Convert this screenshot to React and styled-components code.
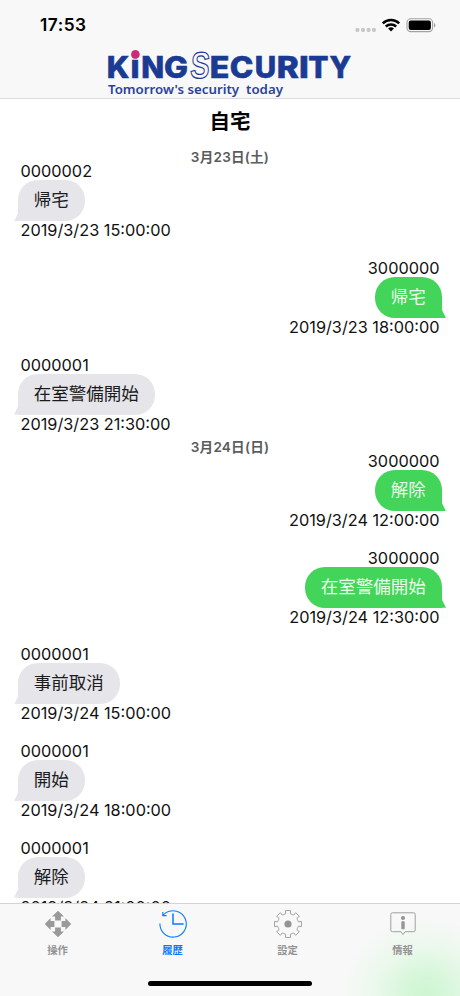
import React, { useState } from 'react'
import styled, { createGlobalStyle, css } from 'styled-components'

const GlobalStyle = createGlobalStyle`
  * {
    box-sizing: border-box;
  }
  body {
    margin: 0;
    background: #fff;
    color: #111;
    font-family: Inter, "Noto Sans CJK JP", sans-serif;
  }
`
const Screen = styled.div`
  width: 460px;
  height: 996px;
  display: flex;
  flex-direction: column;
  overflow: hidden;
  background: #fff;
`
const Header = styled.header`
  flex: none;
  height: 99px;
  background: #f8f8f8;
  border-bottom: 1px solid #dcdcdc;
`
const StatusBar = styled.div`
  display: flex;
  align-items: center;
  justify-content: space-between;
  height: 42px;
  padding: 8px 24px 0 40px;
`
const Clock = styled.span`
  font-size: 17.3px;
  font-weight: 600;
  line-height: 20px;
  letter-spacing: 0.5px;
  color: #000;
`
const LogoSvg = styled.svg`
  display: block;
  margin: 0 auto;
`
const LogoText = styled.text`
  font-family: Inter, sans-serif;
  font-weight: 800;
  font-size: ${props => props.$size || 29.3}px;
  fill: #1b3a93;
  stroke: #1b3a93;
  stroke-width: 0.6;
`
const LogoOutline = styled.text`
  font-family: "Liberation Sans", sans-serif;
  font-weight: 700;
  font-size: 37px;
  fill: #f8f8f8;
  stroke: #1b3a93;
  stroke-width: 1.2;
`
const Tagline = styled.text`
  font-family: "Noto Sans", sans-serif;
  font-weight: 600;
  font-size: 13px;
  fill: #2a4399;
  white-space: pre;
`
const History = styled.main`
  flex: 1;
  min-height: 0;
  overflow: hidden;
`
const Title = styled.h1`
  height: 45.75px;
  margin: 0;
  font-size: 20.5px;
  font-weight: 700;
  line-height: 46px;
  text-align: center;
  color: #000;
`
const DayLabel = styled.div`
  height: 16.65px;
  padding-top: 4px;
  font-size: 13.6px;
  font-weight: 600;
  line-height: 16px;
  letter-spacing: 0.2px;
  text-align: center;
  color: #5c5c5c;
`
const Entry = styled.div`
  display: flex;
  flex-direction: column;
  align-items: ${props => (props.$mine ? 'flex-end' : 'flex-start')};
  height: 80px;
  padding: 0 20.5px;
  margin-top: ${props => (props.$first ? 0 : '16.6px')};
  font-size: 16.3px;
  line-height: 19px;
`
const User = styled.span`
  height: 19px;
  line-height: 21px;
`
const Bubble = styled.div`
  position: relative;
  flex: none;
  height: 41px;
  margin: 0 -2.5px;
  padding: 0 16.2px 0 15.8px;
  font-size: 17.5px;
  line-height: 40px;
  ${props => (props.$mine ? css`
    color: #e9fbe9;
    background: #43d45a;
    border-radius: 20px 20px 0 20px;
  ` : css`
    color: #1c1c1e;
    background: #e5e5ea;
    border-radius: 20px 20px 20px 0;
  `)}
  &::after {
    content: "";
    position: absolute;
    bottom: 0;
    ${props => (props.$mine ? 'right: -4px;' : 'left: -4px;')}
    width: 5px;
    height: 8px;
    background: inherit;
    clip-path: ${props => (props.$mine
      ? 'polygon(0 0, 20% 0, 100% 100%, 0 100%)'
      : 'polygon(80% 0, 100% 0, 100% 100%, 0 100%)')};
  }
`
const TabBar = styled.nav`
  flex: none;
  display: grid;
  grid-template-columns: repeat(4, 1fr);
  grid-template-rows: 68px 1fr;
  height: 93px;
  border-top: 1px solid #d4d4d4;
  background: radial-gradient(ellipse 84px 76px at 426px 89px, #cdf6d1 0%, #d8f7db 28%, #ebf8ec 60%, #f8f8f8 100%) #f8f8f8;
`
const Tab = styled.button`
  display: flex;
  flex-direction: column;
  align-items: center;
  padding: 4px 0 0;
  border: 0;
  background: none;
  font-family: inherit;
  font-size: 10.3px;
  font-weight: 600;
  line-height: 16px;
  color: ${props => (props.$active ? '#0a7aff' : '#949494')};
  svg {
    display: block;
    margin-bottom: 2px;
  }
`
const HomeIndicator = styled.div`
  grid-column: 1 / -1;
  justify-self: center;
  width: 164px;
  height: 5px;
  margin-top: 9px;
  border-radius: 3px;
  background: #000;
`

const StatusIcons = () => (
  <svg width="84" height="20" viewBox="352 15 84 20">
    {[357.5, 363.1, 368.6, 374].map(x => (
      <rect key={x} x={x - 2} y="28" width="3.9" height="3.9" rx="1.4" fill="#c8c8c8" />
    ))}
    <g fill="none" stroke="#000" strokeWidth="2.5">
      <path d="M382.8 23.3a12 12 0 0 1 16.4 0" />
      <path d="M385.8 26.5a7.6 7.6 0 0 1 10.4 0" />
    </g>
    <path d="M391 31.6l-2.9-3a4.2 4.2 0 0 1 5.8 0z" fill="#000" />
    <rect x="407" y="18.8" width="25.6" height="12.8" rx="3.8" fill="none" stroke="#a2a2a2" strokeWidth="1.1" />
    <rect x="408.7" y="20.5" width="22.2" height="9.4" rx="2.2" fill="#000" />
    <path d="M434 23v4.4c2-.8 2-3.6 0-4.4z" fill="#a2a2a2" />
  </svg>
)

// [letter, x, advance]
const wordmark = [
  ['K', 106.8, 22.6],
  ['N', 141.2, 22.9],
  ['G', 164.1, 24],
  ['E', 209.8, 19.6],
  ['C', 229.8, 23.6],
  ['U', 254.8, 21.4],
  ['R', 276.7, 22],
  ['I', 299, 9.8],
  ['T', 308.3, 20.2],
  ['Y', 329.4, 21.6]
]

const Logo = () => (
  <LogoSvg width="250" height="56" viewBox="105 42 250 56">
    <LogoText x="130.6" y="78" $size="32">i</LogoText>
    <LogoOutline transform="translate(189.4 78) skewX(-5) scale(.78 1)">S</LogoOutline>
    {wordmark.map(([letter, x, advance]) => (
      <LogoText key={letter} x={x} y="78" textLength={advance} lengthAdjust="spacingAndGlyphs">{letter}</LogoText>
    ))}
    <circle cx="135.4" cy="54.4" r="4.3" fill="#cb2a79" />
    <Tagline x="108" y="93.8" textLength="175" lengthAdjust="spacingAndGlyphs">{'Tomorrow\'s security  today'}</Tagline>
  </LogoSvg>
)

const MoveIcon = () => (
  <svg width="32" height="32" viewBox="-16 -16 32 32" fill="#9a9a9a">
    {[0, 90, 180, 270].map(deg => (
      <path key={deg} transform={`rotate(${deg})`} d="M0 -13.2L6 -7.4H2.9V-3.6H-2.9V-7.4H-6Z" />
    ))}
  </svg>
)

const HistoryIcon = () => (
  <svg width="32" height="32" viewBox="-16 -16 32 32" fill="none" stroke="#0a7aff">
    <path d="M-13.1 -0.5A13.2 13.2 0 1 0 -4.6 -12.4Q-7.6 -11.4 -9.8 -9" strokeWidth="1.1" />
    <path d="M-10.2 -12V-8.4H-6.4" strokeWidth="1.2" />
    <path d="M0 -10.5V0H10.6" strokeWidth="1.5" />
  </svg>
)

const GearIcon = () => {
  const teeth = []
  for (let i = 0; i < 8; i++) {
    [[-21, 10.4], [-12, 10.6], [-11, 13.7], [11, 13.7], [12, 10.6], [21, 10.4]].forEach(([offset, radius]) => {
      const angle = (i * 45 + offset) * Math.PI / 180
      teeth.push(`${(radius * Math.cos(angle)).toFixed(2)},${(radius * Math.sin(angle)).toFixed(2)}`)
    })
  }
  return (
    <svg width="32" height="32" viewBox="-16 -16 32 32">
      <polygon points={teeth.join(' ')} fill="none" stroke="#a3a3a3" strokeLinejoin="round" />
      <circle r="3.6" fill="#949494" />
    </svg>
  )
}

const InfoIcon = () => (
  <svg width="32" height="32" viewBox="-16 -16 32 32">
    <path
      d="M-10.6 -11.2H10.6Q12.2 -11.2 12.2 -9.6V6.2Q12.2 7.7 10.6 7.7H2L0 10.6L-2 7.7H-10.6Q-12.2 7.7 -12.2 6.2V-9.6Q-12.2 -11.2 -10.6 -11.2Z"
      fill="none"
      stroke="#a0a0a0"
    />
    <circle cy="-6" r="2.1" fill="#949494" />
    <rect x="-1.7" y="-2.8" width="3.4" height="8" rx="0.8" fill="#949494" />
  </svg>
)

const days = [
  {
    label: '3月23日(土)',
    entries: [
      { user: '0000002', text: '帰宅', time: '2019/3/23 15:00:00' },
      { user: '3000000', text: '帰宅', time: '2019/3/23 18:00:00', mine: true },
      { user: '0000001', text: '在室警備開始', time: '2019/3/23 21:30:00' }
    ]
  },
  {
    label: '3月24日(日)',
    entries: [
      { user: '3000000', text: '解除', time: '2019/3/24 12:00:00', mine: true },
      { user: '3000000', text: '在室警備開始', time: '2019/3/24 12:30:00', mine: true },
      { user: '0000001', text: '事前取消', time: '2019/3/24 15:00:00' },
      { user: '0000001', text: '開始', time: '2019/3/24 18:00:00' },
      { user: '0000001', text: '解除', time: '2019/3/24 21:00:00' }
    ]
  }
]

const tabs = [
  { name: '操作', Icon: MoveIcon },
  { name: '履歴', Icon: HistoryIcon },
  { name: '設定', Icon: GearIcon },
  { name: '情報', Icon: InfoIcon }
]

const App = () => {
  const [active, setActive] = useState('履歴')

  return (
    <Screen>
      <GlobalStyle />
      <Header>
        <StatusBar>
          <Clock>17:53</Clock>
          <StatusIcons />
        </StatusBar>
        <Logo />
      </Header>
      <History>
        <Title>自宅</Title>
        {days.map(day => (
          <section key={day.label}>
            <DayLabel>{day.label}</DayLabel>
            {day.entries.map((entry, i) => (
              <Entry key={entry.time} $mine={entry.mine} $first={i === 0}>
                <User>{entry.user}</User>
                <Bubble $mine={entry.mine}>{entry.text}</Bubble>
                <span>{entry.time}</span>
              </Entry>
            ))}
          </section>
        ))}
      </History>
      <TabBar>
        {tabs.map(({ name, Icon }) => (
          <Tab key={name} $active={active === name} onClick={() => setActive(name)}>
            <Icon />
            {name}
          </Tab>
        ))}
        <HomeIndicator />
      </TabBar>
    </Screen>
  )
}

export default App
